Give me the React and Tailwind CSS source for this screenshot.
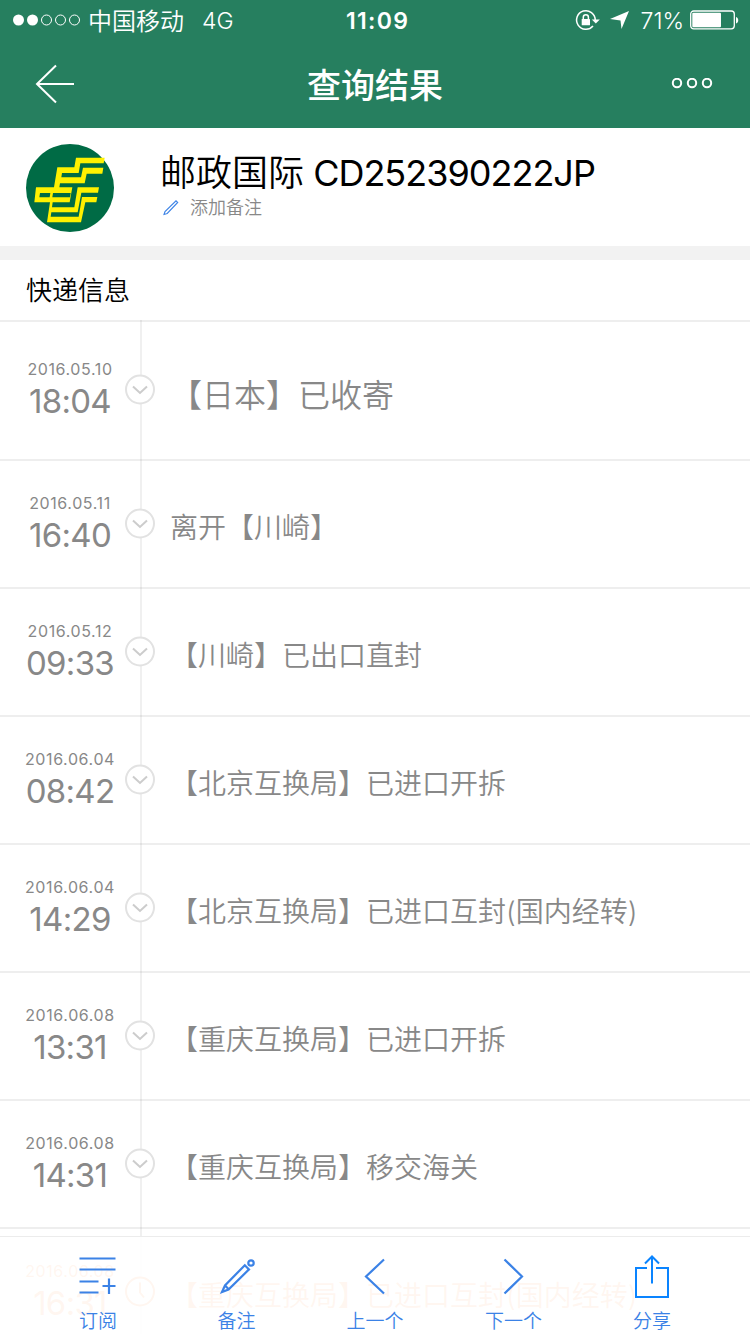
import React from "react";

const EVENTS = [
  { date: "2016.05.10", time: "18:04", text: "【日本】已收寄", first: true },
  { date: "2016.05.11", time: "16:40", text: "离开【川崎】" },
  { date: "2016.05.12", time: "09:33", text: "【川崎】已出口直封" },
  { date: "2016.06.04", time: "08:42", text: "【北京互换局】已进口开拆" },
  { date: "2016.06.04", time: "14:29", text: "【北京互换局】已进口互封(国内经转)" },
  { date: "2016.06.08", time: "13:31", text: "【重庆互换局】已进口开拆" },
  { date: "2016.06.08", time: "14:31", text: "【重庆互换局】移交海关" },
  { date: "2016.06.08", time: "16:31", text: "【重庆互换局】已进口互封(国内经转)", active: true },
];

function StatusBar() {
  return (
    <div className="relative flex h-10 items-center justify-between pl-3 pr-[10px] text-[23px] leading-10">
      <div className="flex items-center">
        <svg className="h-[14px] w-[70px]" viewBox="0 0 70 14" fill="none" stroke="#fff">
          <circle cx="6.5" cy="7" r="5.5" fill="#fff" stroke="none" />
          <circle cx="20.5" cy="7" r="5.5" fill="#fff" stroke="none" />
          <circle cx="34.5" cy="7" r="5" />
          <circle cx="48.5" cy="7" r="5" />
          <circle cx="62.5" cy="7" r="5" />
        </svg>
        <span className="ml-[6px] mt-[3px] text-[24px]">中国移动</span>
        <span className="ml-[18px] mt-[2px]">4G</span>
      </div>
      <div className="absolute left-1/2 w-[68px] -translate-x-[29px] pt-[2px] whitespace-nowrap font-semibold tracking-[1.3px]">11:09</div>
      <div className="flex items-center">
        <svg className="h-6 w-6 overflow-visible" viewBox="0 0 24 24" fill="none" stroke="#fff" strokeWidth="1.5">
          <path d="M18.200 12A9.300 9.300 0 1 0 16 18" />
          <path d="M14.800 11.500h8l-4 4z" fill="#fff" stroke="none" />
          <rect x="4.700" y="11" width="8.300" height="6.300" rx="0.6" fill="#fff" stroke="none" />
          <path d="M6.300 11V9.200a2.550 2.550 0 0 1 5.100 0V11" />
        </svg>
        <svg className="ml-[10px] h-[18px] w-[19px] overflow-visible" viewBox="0 0 19 18" fill="#fff">
          <path d="M18 0 10.500 18 9.500 9.500 -1 8z" />
        </svg>
        <span className="ml-[11px] mt-[2px]">71%</span>
        <svg className="ml-[6px] h-5 w-[50px]" viewBox="0 0 50 20" fill="none">
          <rect x="0.7" y="1" width="43.6" height="17.8" rx="3" stroke="#fff" strokeWidth="1.3" />
          <rect x="2.3" y="2.7" width="28.7" height="14.6" rx="1" fill="#fff" />
          <path d="M46 7v6.5c3-.8 3-5.700 0-6.500z" fill="#fff" />
        </svg>
      </div>
    </div>
  );
}

function PostLogo() {
  return (
    <svg className="h-[88px] w-[88px]" viewBox="78 48 264 264" fill="#fff100">
      <circle cx="210" cy="180" r="132" fill="#006b45" />
      <path d="M228 89H314L311 106H241L236 135H186L184 148H243L249 119H310L307 137H260L254 166H180L178 178H217L209 223H158L156 238H223L233 178H297L294 194H244L233 253H154L152 266H236L246 207H292L289 223H256L243 283H141L150 223H103L108 178H162L172 118H223Z" />
      <path d="M120 195H151L149 208H118ZM159 195H212L210 208H157Z" fill="#006b45" />
    </svg>
  );
}

function Marker({ active }) {
  return (
    <svg className="h-8 w-8" viewBox="0 0 32 32" fill="none" strokeWidth="2">
      <circle cx="16" cy="16.500" r="14" fill="#fff" stroke={active ? "#ff7a2b" : "#e2e2e2"} />
      {active ? (
        <path d="M16 7.500v10l4 5" stroke="#ff7a2b" />
      ) : (
        <path d="M9 13.500l7 6.500 7-6.500" stroke="#cccccc" />
      )}
    </svg>
  );
}

function EventRow({ date, time, text, first, active }) {
  const tone = active ? "text-[#ff7a2b]" : "text-[#888888]";
  return (
    <li className={`flex border-b-2 border-[#eeeeee] ${first ? "h-[139px] pt-[36px]" : "h-32 pt-[31px]"} ${tone}`}>
      <div className="w-[140px] shrink-0 text-center font-normal">
        <div className="text-[16px] leading-[22px] tracking-[0.6px]">{date}</div>
        <div className="text-[33px] leading-[42px] tracking-[-0.7px]">{time}</div>
      </div>
      <div className="relative z-10 -ml-4 mt-[15px] h-8 w-8 shrink-0">
        <Marker active={active} />
      </div>
      {first ? (
        <div className="ml-[14px] mt-[18px] whitespace-nowrap text-[32px] leading-10">{text}</div>
      ) : (
        <div className="ml-[14px] mt-[16px] whitespace-nowrap text-[28px] leading-10">{text}</div>
      )}
    </li>
  );
}

function Tab({ label, children }) {
  return (
    <button className="flex h-full w-[138.500px] flex-col items-center justify-start">
      <svg className="mt-[15px] h-12 w-12 shrink-0" viewBox="0 0 48 48" fill="none" stroke="#3b82e6" strokeWidth="2.2">
        {children}
      </svg>
      <span className="mt-[10px] text-[19px] leading-6">{label}</span>
    </button>
  );
}

export default function App() {
  return (
    <div className="relative h-[1334px] w-[750px] overflow-hidden bg-white font-['Inter','Noto_Sans_CJK_SC',sans-serif] font-[350] text-black">
      <header className="h-32 bg-[#267f5f] text-white">
        <StatusBar />
        <div className="flex h-[88px] items-center justify-between pl-[35px] pr-[37px]">
          <svg className="h-10 w-10" viewBox="0 0 40 40" fill="none" stroke="#fff" strokeWidth="2">
            <path d="M21 1.500 2 20l19 18.500M2 20h37" />
          </svg>
          <h1 className="pl-1 pt-[3px] text-[34px] font-medium leading-10">查询结果</h1>
          <svg className="h-3 w-[42px]" viewBox="0 0 42 12" fill="none" stroke="#fff" strokeWidth="2">
            <circle cx="6" cy="5" r="4.200" />
            <circle cx="21" cy="5" r="4.200" />
            <circle cx="36" cy="5" r="4.200" />
          </svg>
        </div>
      </header>

      <section className="flex h-[118px] pl-[26px] pt-4">
        <PostLogo />
        <div className="ml-[46px] flex flex-col">
          <div className="mt-[6px] whitespace-nowrap text-[36px] leading-[46px]">
            邮政国际 <span className="-ml-px font-normal tracking-[-1px]">CD252390222JP</span>
          </div>
          <div className="flex items-center pt-px text-[18px] leading-[22px] text-[#888888]">
            <svg className="ml-[3px] mr-[11px] h-4 w-4" viewBox="0 0 16 16" fill="none" stroke="#3b82e6" strokeWidth="1.100">
              <path d="M1 14.500l1-3L13 .800l1.700 1.700L4.200 13.500z" />
            </svg>
            添加备注
          </div>
        </div>
      </section>
      <div className="h-[14px] bg-[#f2f2f2]" />

      <h2 className="h-[62px] border-b-2 border-[#eeeeee] pl-[26px] pt-px text-[26px] leading-[60px]">快递信息</h2>

      <div className="relative">
        <div className="absolute -top-[2px] bottom-0 left-[140px] w-[2px] bg-black/6" />
        <ul>
          {EVENTS.map((e, i) => (
            <EventRow key={i} {...e} />
          ))}
        </ul>
      </div>

      <nav className="absolute inset-x-0 bottom-0 z-20 flex h-[98px] justify-center border-t border-[#ececec] bg-white/93 text-[#3b82e6]">
        <Tab label="订阅">
          <path d="M5.500 6.500h36M5.500 17.500h36M5.500 29.500h19M5.500 40.500h19M28.500 34H41.500M35 26.500v15.500" />
        </Tab>
        <Tab label="备注">
          <path d="M9 40l3-6.500L31.800 13.200l4.200 4.200L15.500 37.500zM12.500 34l3 3" strokeWidth="2.200" />
          <circle cx="38" cy="11" r="2.700" strokeWidth="2.200" />
        </Tab>
        <Tab label="上一个">
          <path d="M33 7.500 15 24.500 33 41.500" />
        </Tab>
        <Tab label="下一个">
          <path d="M14.500 7.500l17.500 17L14.500 41.500" />
        </Tab>
        <Tab label="分享">
          <path d="M19 16H8v29h32V16H28M24 31.500V4M17 11.500l7-7 7 7" stroke="#0a84ff" strokeWidth="2" />
        </Tab>
      </nav>
    </div>
  );
}
